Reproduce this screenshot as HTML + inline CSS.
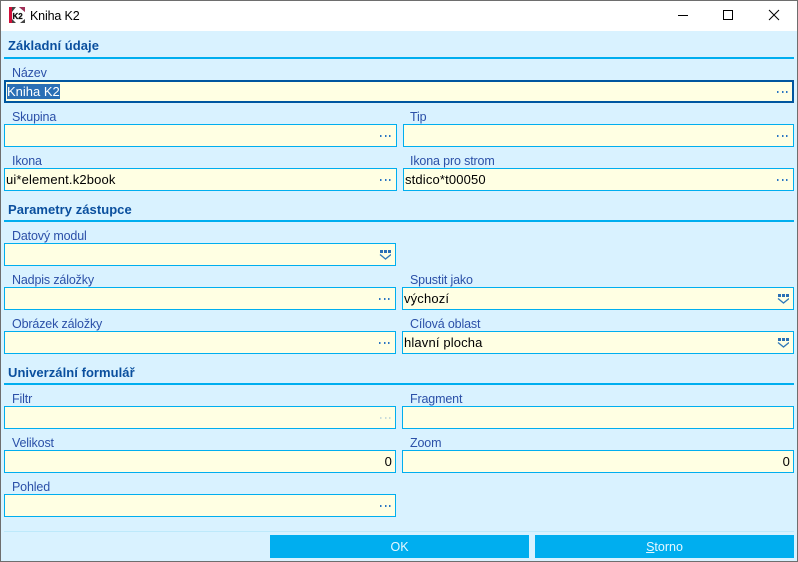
<!DOCTYPE html>
<html><head><meta charset="utf-8"><style>
html,body{margin:0;padding:0;width:798px;height:562px;overflow:hidden;background:#d9f2ff}
body{position:relative;font-family:"Liberation Sans",sans-serif;font-size:13px;color:#000}
div{position:absolute;box-sizing:border-box}
.h{left:8px;font-weight:bold;color:#0a4f9e;font-size:13px;white-space:nowrap;letter-spacing:.05px;line-height:14px}
.ln{left:4px;width:790px;height:2px;background:#00aeef}
.l{color:#2b50a8;white-space:nowrap;line-height:14px;font-size:12.5px;letter-spacing:-.15px}
.f{height:23px;background:#ffffe3;border:1px solid #00aeef;line-height:22px;padding-left:1px;white-space:nowrap;letter-spacing:.15px}
.r{text-align:right;padding-right:3px;padding-left:0}
.d{position:absolute;right:5px;top:10px;width:11px;height:2px}
.d i{position:absolute;top:0;width:2px;height:2px;background:linear-gradient(90deg,#2a74bd 50%,#8fb9dc 50%)}
.b{position:absolute;right:4px;top:6px}
.btn{top:535px;height:23px;background:#00aeef;color:#e6f8ff;text-align:center;line-height:25px;font-size:12.5px}
</style></head><body>
<div style="left:0;top:0;width:798px;height:31px;background:#fff"></div>
<svg style="position:absolute;left:9px;top:7px" width="17" height="17" viewBox="0 0 17 17"><rect width="17" height="17" fill="#fff"/><rect x="0" y="0" width="3" height="16" fill="#d0103a"/><path d="M3 0h4L3 5zM10 0h6v5zM3 16v-4l4 4zM11 16l5-4v4z" fill="#444"/><path d="M10 0l6 5v-5z" fill="#a03058"/><text x="3.500" y="12" font-family="Liberation Sans" font-weight="bold" font-size="8" stroke="#111" stroke-width=".3" fill="#111">K2</text></svg>
<div style="left:30px;top:9px;line-height:14px;white-space:nowrap;font-size:12.5px;letter-spacing:-.15px">Kniha K2</div>
<svg style="position:absolute;left:670px;top:0" width="128" height="31" viewBox="0 0 128 31" fill="none" stroke="#000" stroke-width="1"><path d="M8 15.500h10"/><rect x="53.500" y="10.500" width="9" height="9"/><path d="M99 10l10 10M109 10l-10 10"/></svg>

<div class="h" style="top:39px">Základní údaje</div><div class="ln" style="top:57px"></div>
<div class="l" style="left:12px;top:66px">Název</div>
<div class="f" style="left:4px;top:80px;width:790px;border:2px solid #00569f;padding:0;line-height:19px"><span style="position:absolute;left:1px;top:2px;height:15px;width:53px;background:#2a6fb5;color:#fff;line-height:16px;overflow:hidden;letter-spacing:0">Kniha K2</span><span class="d" style="top:9px;right:4px"><i style="left:0"></i><i style="left:5px"></i><i style="left:9px"></i></span></div>

<div class="l" style="left:12px;top:110px">Skupina</div><div class="l" style="left:410px;top:110px">Tip</div>
<div class="f" style="left:4px;top:124px;width:393px"><span class="d"><i style="left:0"></i><i style="left:5px"></i><i style="left:9px"></i></span></div>
<div class="f" style="left:403px;top:124px;width:391px"><span class="d"><i style="left:0"></i><i style="left:5px"></i><i style="left:9px"></i></span></div>

<div class="l" style="left:12px;top:154px">Ikona</div><div class="l" style="left:410px;top:154px">Ikona pro strom</div>
<div class="f" style="left:4px;top:168px;width:393px">ui*element.k2book<span class="d"><i style="left:0"></i><i style="left:5px"></i><i style="left:9px"></i></span></div>
<div class="f" style="left:403px;top:168px;width:391px">stdico*t00050<span class="d"><i style="left:0"></i><i style="left:5px"></i><i style="left:9px"></i></span></div>

<div class="h" style="top:203px">Parametry zástupce</div><div class="ln" style="top:220px"></div>
<div class="l" style="left:12px;top:229px">Datový modul</div>
<div class="f" style="left:4px;top:243px;width:392px"><svg class="b" width="12" height="10" viewBox="0 0 12 10"><path d="M1 0h3v3H1zM5 0h3v3H5zM9 0h3v3H9z" fill="#2a6fb5"/><path d="M1 4.500l5.500 4.500 5.500-4.500" fill="none" stroke="#2f78b8" stroke-width="1.300"/></svg></div>

<div class="l" style="left:12px;top:273px">Nadpis záložky</div><div class="l" style="left:410px;top:273px">Spustit jako</div>
<div class="f" style="left:4px;top:287px;width:392px"><span class="d"><i style="left:0"></i><i style="left:5px"></i><i style="left:9px"></i></span></div>
<div class="f" style="left:402px;top:287px;width:392px">výchozí<svg class="b" width="12" height="10" viewBox="0 0 12 10"><path d="M1 0h3v3H1zM5 0h3v3H5zM9 0h3v3H9z" fill="#2a6fb5"/><path d="M1 4.500l5.500 4.500 5.500-4.500" fill="none" stroke="#2f78b8" stroke-width="1.300"/></svg></div>

<div class="l" style="left:12px;top:317px">Obrázek záložky</div><div class="l" style="left:410px;top:317px">Cílová oblast</div>
<div class="f" style="left:4px;top:331px;width:392px"><span class="d"><i style="left:0"></i><i style="left:5px"></i><i style="left:9px"></i></span></div>
<div class="f" style="left:402px;top:331px;width:392px">hlavní plocha<svg class="b" width="12" height="10" viewBox="0 0 12 10"><path d="M1 0h3v3H1zM5 0h3v3H5zM9 0h3v3H9z" fill="#2a6fb5"/><path d="M1 4.500l5.500 4.500 5.500-4.500" fill="none" stroke="#2f78b8" stroke-width="1.300"/></svg></div>

<div class="h" style="top:366px">Univerzální formulář</div><div class="ln" style="top:383px"></div>
<div class="l" style="left:12px;top:392px">Filtr</div><div class="l" style="left:410px;top:392px">Fragment</div>
<div class="f" style="left:4px;top:406px;width:392px"><span class="d" style="opacity:.25;right:4px"><i style="left:0"></i><i style="left:5px"></i><i style="left:9px"></i></span></div>
<div class="f" style="left:402px;top:406px;width:392px"></div>

<div class="l" style="left:12px;top:436px">Velikost</div><div class="l" style="left:410px;top:436px">Zoom</div>
<div class="f r" style="left:4px;top:450px;width:392px">0</div>
<div class="f r" style="left:402px;top:450px;width:392px">0</div>

<div class="l" style="left:12px;top:480px">Pohled</div>
<div class="f" style="left:4px;top:494px;width:392px"><span class="d" style="right:4px"><i style="left:0"></i><i style="left:5px"></i><i style="left:9px"></i></span></div>

<div style="left:4px;top:531px;width:790px;height:1px;background:#bde9fb"></div>
<div class="btn" style="left:270px;width:259px">OK</div>
<div class="btn" style="left:535px;width:259px"><u>S</u>torno</div>

<div style="left:0;top:0;width:798px;height:562px;border:1px solid #6e6e6e;background:transparent"></div>
</body></html>
